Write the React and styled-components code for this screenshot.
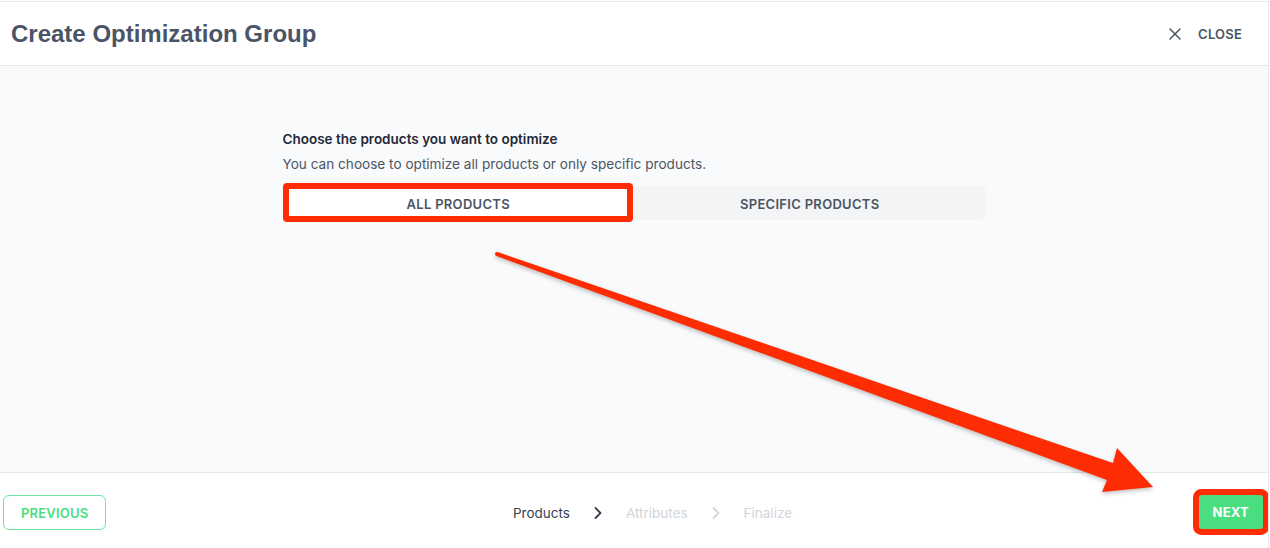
import React from "react";
import styled, { createGlobalStyle } from "styled-components";

const GlobalStyle = createGlobalStyle`
  html, body {
    margin: 0;
    padding: 0;
    background: #ffffff;
    font-family: "Inter", "Noto Sans", sans-serif;
  }
  * { box-sizing: border-box; }
`;

const ANNOTATION = "#fe2c02";

const Page = styled.div`
  position: relative;
  width: 1269px;
  height: 548px;
  margin-top: 1px;
  border-top: 1px solid #e5e7eb;
  border-right: 1px solid #e5e7eb;
  display: flex;
  flex-direction: column;
  overflow: hidden;
`;

const Header = styled.header`
  height: 64px;
  flex-shrink: 0;
  display: flex;
  align-items: center;
  justify-content: space-between;
  padding: 0 26px 0 11px;
  background: #ffffff;
  border-bottom: 1px solid #e5e7eb;
`;

const Title = styled.h1`
  margin: 0;
  font-family: "Liberation Sans", Arial, sans-serif;
  font-size: 24px;
  font-weight: 700;
  color: #4a5466;
`;

const CloseButton = styled.button`
  display: flex;
  align-items: center;
  gap: 17px;
  border: 0;
  background: none;
  padding: 0;
  font-family: inherit;
  font-size: 13px;
  font-weight: 600;
  color: #4b5563;
  letter-spacing: 0.2px;
  cursor: pointer;
`;

const Body = styled.main`
  height: 407px;
  flex-shrink: 0;
  background: #f9fafb;
  border-bottom: 1px solid #e5e7eb;
  padding-top: 63px;
  display: flex;
  justify-content: center;
`;

const Section = styled.section`
  width: 703px;
  display: flex;
  flex-direction: column;
`;

const Question = styled.h2`
  margin: 0;
  font-size: 13.5px;
  line-height: 20px;
  font-weight: 600;
  color: #1f2937;
`;

const Hint = styled.p`
  margin: 5px 0 12px;
  font-size: 13.6px;
  line-height: 20px;
  color: #4b5563;
`;

const Toggle = styled.div`
  display: grid;
  grid-template-columns: 1fr 1fr;
  height: 34px;
  background: #f3f4f6;
  border-radius: 6px;
`;

const ToggleOption = styled.button`
  position: relative;
  border: 0;
  border-radius: 5px;
  padding: 1px 0 0;
  background: ${(p) => (p.$active ? "#ffffff" : "transparent")};
  font-family: inherit;
  font-size: 13px;
  font-weight: 600;
  color: #4b5563;
  letter-spacing: 0.3px;
  cursor: pointer;

  ${(p) =>
    p.$marked &&
    `
    &::after {
      content: "";
      position: absolute;
      top: -3px;
      bottom: -2px;
      left: 0;
      right: 1px;
      border: 6px solid ${ANNOTATION};
      border-radius: 4px;
      pointer-events: none;
    }
  `}
`;

const Footer = styled.footer`
  flex: 1;
  display: flex;
  align-items: flex-start;
  justify-content: space-between;
  padding: 22px 5px 0 3px;
  background: #ffffff;
`;

const GhostButton = styled.button`
  height: 35px;
  padding: 0 17px;
  border: 1px solid #6ee7a0;
  border-radius: 6px;
  background: #ffffff;
  font-family: inherit;
  font-size: 13px;
  font-weight: 600;
  color: #4ade80;
  letter-spacing: 0.2px;
  cursor: pointer;
`;

const PrimaryButton = styled.button`
  height: 34px;
  padding: 0 14px;
  border: 0;
  background: #4ade80;
  font-family: inherit;
  font-size: 13px;
  font-weight: 700;
  color: #ffffff;
  letter-spacing: 0.2px;
  cursor: pointer;
  box-shadow: ${(p) => (p.$marked ? `0 0 0 6px ${ANNOTATION}` : "none")};
  border-radius: ${(p) => (p.$marked ? "3px" : "6px")};
`;

const Steps = styled.nav`
  display: flex;
  align-items: center;
  gap: 24px;
  height: 35px;
`;

const Step = styled.span`
  font-size: 13.5px;
  color: ${(p) => (p.$current ? "#374151" : "#d1d5db")};
`;

const Chevron = ({ color }) => (
  <svg width="8" height="12" viewBox="0 0 8 12" fill="none">
    <path
      d="M1.5 1 L6.5 6 L1.5 11"
      stroke={color}
      strokeWidth="1.8"
      strokeLinecap="round"
      strokeLinejoin="round"
    />
  </svg>
);

const CloseIcon = () => (
  <svg width="12" height="12" viewBox="0 0 12 12" fill="none">
    <path
      d="M1 1 L11 11 M11 1 L1 11"
      stroke="#4b5563"
      strokeWidth="1.5"
      strokeLinecap="round"
    />
  </svg>
);

const Overlay = styled.svg`
  position: absolute;
  left: 0;
  top: -2px;
  width: 1270px;
  height: 548px;
  pointer-events: none;
  filter: drop-shadow(0 2px 2px rgba(0, 0, 0, 0.25));
`;

const Arrow = () => (
  <Overlay viewBox="0 0 1270 548">
    <circle cx="497" cy="254" r="2" fill={ANNOTATION} />
    <polygon
      fill={ANNOTATION}
      points="497.7,252.1 1113,463.1 1117,448 1153,487 1102,492 1107,480.1 496.3,255.9"
    />
  </Overlay>
);

const steps = ["Products", "Attributes", "Finalize"];

export default function App() {
  return (
    <>
      <GlobalStyle />
      <Page>
        <Header>
          <Title>Create Optimization Group</Title>
          <CloseButton>
            <CloseIcon />
            CLOSE
          </CloseButton>
        </Header>
        <Body>
          <Section>
            <Question>Choose the products you want to optimize</Question>
            <Hint>
              You can choose to optimize all products or only specific products.
            </Hint>
            <Toggle>
              <ToggleOption $active $marked>
                ALL PRODUCTS
              </ToggleOption>
              <ToggleOption>SPECIFIC PRODUCTS</ToggleOption>
            </Toggle>
          </Section>
        </Body>
        <Footer>
          <GhostButton>PREVIOUS</GhostButton>
          <Steps>
            {steps.map((s, i) => (
              <React.Fragment key={s}>
                {i > 0 && <Chevron color={i === 1 ? "#374151" : "#d1d5db"} />}
                <Step $current={i === 0}>{s}</Step>
              </React.Fragment>
            ))}
          </Steps>
          <PrimaryButton $marked>NEXT</PrimaryButton>
        </Footer>
        <Arrow />
      </Page>
    </>
  );
}
